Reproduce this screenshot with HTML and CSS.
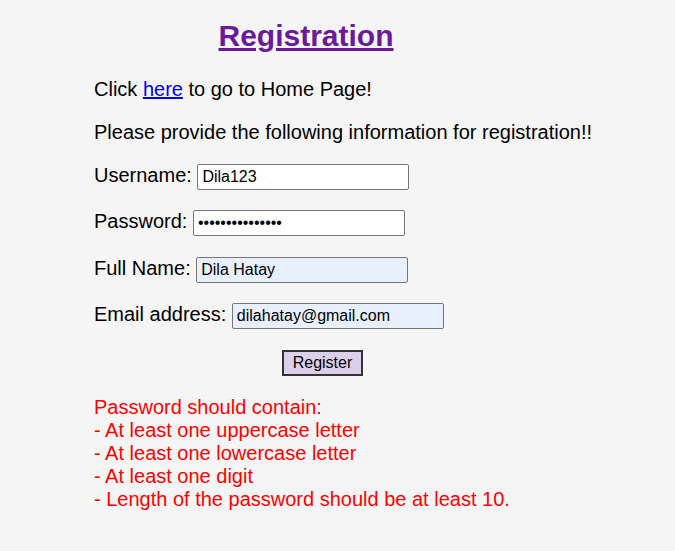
FILE: index.html
```html
<!DOCTYPE html>
<html>
<head>
<meta charset="utf-8">
<link rel="stylesheet" href="styles.css">
</head>
<body>
<div class="page">
  <h1 class="title"><a href="#" class="title-link">Registration</a></h1>
  <p class="line">Click <a href="#" class="home-link">here</a> to go to Home Page!</p>
  <p class="line">Please provide the following information for registration!!</p>
  <form class="form">
    <p class="line row">Username: <input class="field" type="text" value="Dila123"></p>
    <p class="line row">Password: <input class="field" type="password" value="dilahatay123456"></p>
    <p class="line row">Full Name: <input class="field filled" type="text" value="Dila Hatay"></p>
    <p class="line row">Email address: <input class="field filled" type="text" value="dilahatay@gmail.com"></p>
    <div class="actions"><button class="btn" type="button">Register</button></div>
  </form>
  <div class="rules">Password should contain:<br>- At least one uppercase letter<br>- At least one lowercase letter<br>- At least one digit<br>- Length of the password should be at least 10.</div>
</div>
</body>
</html>
```
FILE: styles.css
```css
html, body {
  margin: 0;
  padding: 0;
  background: #f5f5f5;
}
body {
  font-family: "Liberation Sans", Arial, sans-serif;
  font-size: 20px;
  color: #000;
}
.page {
  padding: 19px 0 0 94px;
}
.title {
  margin: 0 0 25px 0;
  width: 424px;
  text-align: center;
  font-size: 30px;
  font-weight: bold;
  line-height: 34px;
}
.title-link {
  color: #6a1b9a;
}
.home-link {
  color: #0000ee;
}
.line {
  margin: 0 0 20px 0;
}
.row {
  margin-bottom: 20.4px;
}
.form {
  margin: 0;
}
.field {
  box-sizing: border-box;
  width: 212px;
  height: 26px;
  border: 1px solid #767676;
  border-radius: 2px;
  padding: 1px 4px;
  font-family: "Liberation Sans", Arial, sans-serif;
  font-size: 16px;
  background: #fff;
  color: #000;
  vertical-align: baseline;
}
.field.filled {
  background: #e8f0fe;
}
.actions {
  padding-left: 188px;
}
.btn {
  box-sizing: border-box;
  width: 81px;
  height: 26px;
  background: #dccfec;
  border: 2px solid #333;
  font-family: "Liberation Sans", Arial, sans-serif;
  font-size: 16px;
  color: #000;
  padding: 0;
}
.rules {
  margin-top: 20px;
  color: #ff0000;
  line-height: 23px;
}
```
